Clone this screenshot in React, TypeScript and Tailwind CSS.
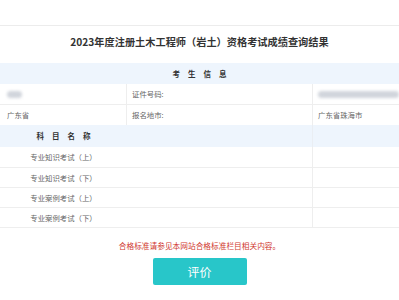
import React from "react";

const subjects = [
  "专业知识考试（上）",
  "专业知识考试（下）",
  "专业案例考试（上）",
  "专业案例考试（下）",
];

function Blur({ w }: { w: string }) {
  return <div className={`h-[7px] ${w} bg-gray-300 blur-[1.5px] rounded-sm`} />;
}

export default function App() {
  return (
    <div
      className="w-[399px] h-[300px] bg-white text-[#666] overflow-hidden"
      style={{ fontFamily: '"Noto Sans CJK SC", "Noto Sans", sans-serif' }}
    >
      {/* top strip */}
      <div className="h-[26px] border-b border-[#ececec]" />

      {/* title */}
      <div className="h-[37px] flex items-center justify-center">
        <h2 className="text-[10.2px] font-bold text-[#333] -mt-[5px]">
          2023年度注册土木工程师（岩土）资格考试成绩查询结果
        </h2>
      </div>

      {/* 考生信息 */}
      <div className="h-[21px] bg-[#eef5fd] flex items-center justify-center text-[7.5px] font-bold text-[#333] tracking-[8px] pl-[8px]">
        考生信息
      </div>
      <div className="text-[7.4px]">
        <div className="h-[21px] flex border-b border-[#eeeeee]">
          <div className="w-[127px] flex items-center px-[7px] border-r border-[#eeeeee]">
            <Blur w="w-[15px]" />
          </div>
          <div className="w-[186px] flex items-center px-[5px] border-r border-[#eeeeee]">证件号码:</div>
          <div className="flex-1 flex items-center pl-[5px]">
            <Blur w="w-[81px]" />
          </div>
        </div>
        <div className="h-[20px] flex">
          <div className="w-[127px] flex items-center px-[7px] border-r border-[#eeeeee]">广东省</div>
          <div className="w-[186px] flex items-center px-[5px] border-r border-[#eeeeee]">报名地市:</div>
          <div className="flex-1 flex items-center pl-[5px]">广东省珠海市</div>
        </div>
      </div>

      {/* 科目名称 */}
      <div className="h-[22px] bg-[#eef5fd] flex">
        <div className="w-[313px] flex border-r border-[#eaeef3]">
          <div className="w-[127px] flex items-center justify-center text-[7.5px] font-bold text-[#333] tracking-[8px] pl-[8px]">
            科目名称
          </div>
        </div>
        <div className="flex-1" />
      </div>
      <div className="text-[7.4px]">
        {subjects.map((s, i) => (
          <div key={s} className={`flex border-b border-[#eeeeee] ${i === 0 ? "h-[21px]" : "h-[20px]"}`}>
            <div className="w-[313px] flex border-r border-[#eeeeee]">
              <div className="w-[127px] flex items-center justify-center">{s}</div>
            </div>
            <div className="flex-1" />
          </div>
        ))}
      </div>

      {/* notice */}
      <p className="mt-[12px] text-center text-[7.7px] text-[#d0382f] leading-[12px]">
        合格标准请参见本网站合格标准栏目相关内容。
      </p>
      <div className="flex justify-center mt-[6px]">
        <button className="w-[94px] h-[27px] rounded-[2px] bg-[#28c6c9] text-white text-[12px]">
          评价
        </button>
      </div>
    </div>
  );
}
